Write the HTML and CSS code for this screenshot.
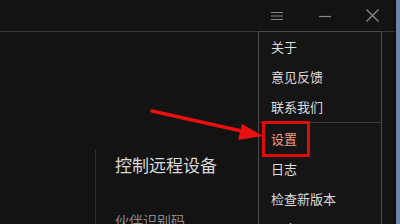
FILE: index.html
```html
<!DOCTYPE html>
<html lang="zh">
<head>
<meta charset="utf-8">
<link rel="stylesheet" href="styles.css">
</head>
<body>
<div class="window">
  <div class="main">
    <div class="titlebar">
      <div class="tb-btn">
        <svg width="14" height="12" viewBox="0 0 14 12"><path d="M1 2.5H13M1 6H13M1 9.5H13" stroke="#8a8a8a" stroke-width="1.2"/></svg>
      </div>
      <div class="tb-btn">
        <svg width="14" height="12" viewBox="0 0 14 12"><path d="M1 6.5H13" stroke="#8a8a8a" stroke-width="1.2"/></svg>
      </div>
      <div class="tb-btn">
        <svg width="15" height="15" viewBox="0 0 15 15"><path d="M1.5 1.5L13.5 13.5M13.5 1.5L1.5 13.5" stroke="#8a8a8a" stroke-width="1.3"/></svg>
      </div>
    </div>
    <div class="content">
      <div class="leftpane"></div>
      <div class="rightpane">
        <div class="title">控制远程设备</div>
        <div class="label">伙伴识别码</div>
      </div>
    </div>
  </div>
  <div class="edge"></div>

  <div class="menu">
    <div class="item">关于</div>
    <div class="item">意见反馈</div>
    <div class="item">联系我们</div>
    <div class="item sep active">设置</div>
    <div class="item">日志</div>
    <div class="item">检查新版本</div>
    <div class="item">退出</div>
  </div>

  <div class="highlight"></div>

  <svg class="arrow" width="400" height="224" viewBox="0 0 400 224">
    <path d="M152 111 L246 132" stroke="#e81010" stroke-width="3.5" stroke-linecap="round"/>
    <path d="M263 136 L242 124 L238 140 Z" fill="#e81010"/>
  </svg>
</div>
</body>
</html>
```

FILE: styles.css
```css
html, body {
  margin: 0;
  padding: 0;
  background: #131313;
}
body {
  width: 400px;
  height: 224px;
  overflow: hidden;
  font-family: "Noto Sans CJK SC", "Noto Sans", sans-serif;
}
.window {
  position: relative;
  width: 400px;
  height: 224px;
  display: flex;
  overflow: hidden;
}
.main {
  flex: 1;
  display: flex;
  flex-direction: column;
  min-height: 0;
}
.edge {
  width: 4px;
  background: #6f84ad;
  border-left: 1px solid #0c0c0c;
}
.titlebar {
  height: 32px;
  flex-shrink: 0;
  border-bottom: 1px solid #353535;
  display: flex;
  justify-content: flex-end;
  align-items: center;
  gap: 33px;
  padding-right: 15px;
  box-sizing: border-box;
}
.tb-btn {
  width: 15px;
  height: 15px;
  display: flex;
  align-items: center;
  justify-content: center;
}
.content {
  flex: 1;
  display: flex;
  min-height: 0;
  overflow: hidden;
}
.leftpane {
  width: 95px;
}
.rightpane {
  flex: 1;
  margin-top: 118px;
  border-left: 1px solid #2e2e2e;
  padding-left: 19px;
}
.title {
  color: #d8d8d8;
  font-size: 17px;
  line-height: 24px;
  margin-top: 3px;
}
.label {
  color: #8a8a8a;
  font-size: 14px;
  line-height: 20px;
  margin-top: 33px;
}
.menu {
  position: absolute;
  left: 258px;
  top: 31px;
  width: 124px;
  height: 200px;
  background: #151515;
  border: 1px solid #4a4a4a;
  box-sizing: border-box;
}
.item {
  height: 30px;
  line-height: 30px;
  padding-left: 12px;
  color: #dcdcdc;
  font-size: 13px;
}
.item.sep {
  border-top: 1px solid #3c3c3c;
  height: 31px;
  line-height: 32px;
}
.item.active {
  color: #f29a80;
}
.highlight {
  position: absolute;
  left: 262px;
  top: 121px;
  width: 48px;
  height: 36px;
  border: 3px solid #e00c0c;
  box-sizing: border-box;
}
.arrow {
  position: absolute;
  left: 0;
  top: 0;
}
```
